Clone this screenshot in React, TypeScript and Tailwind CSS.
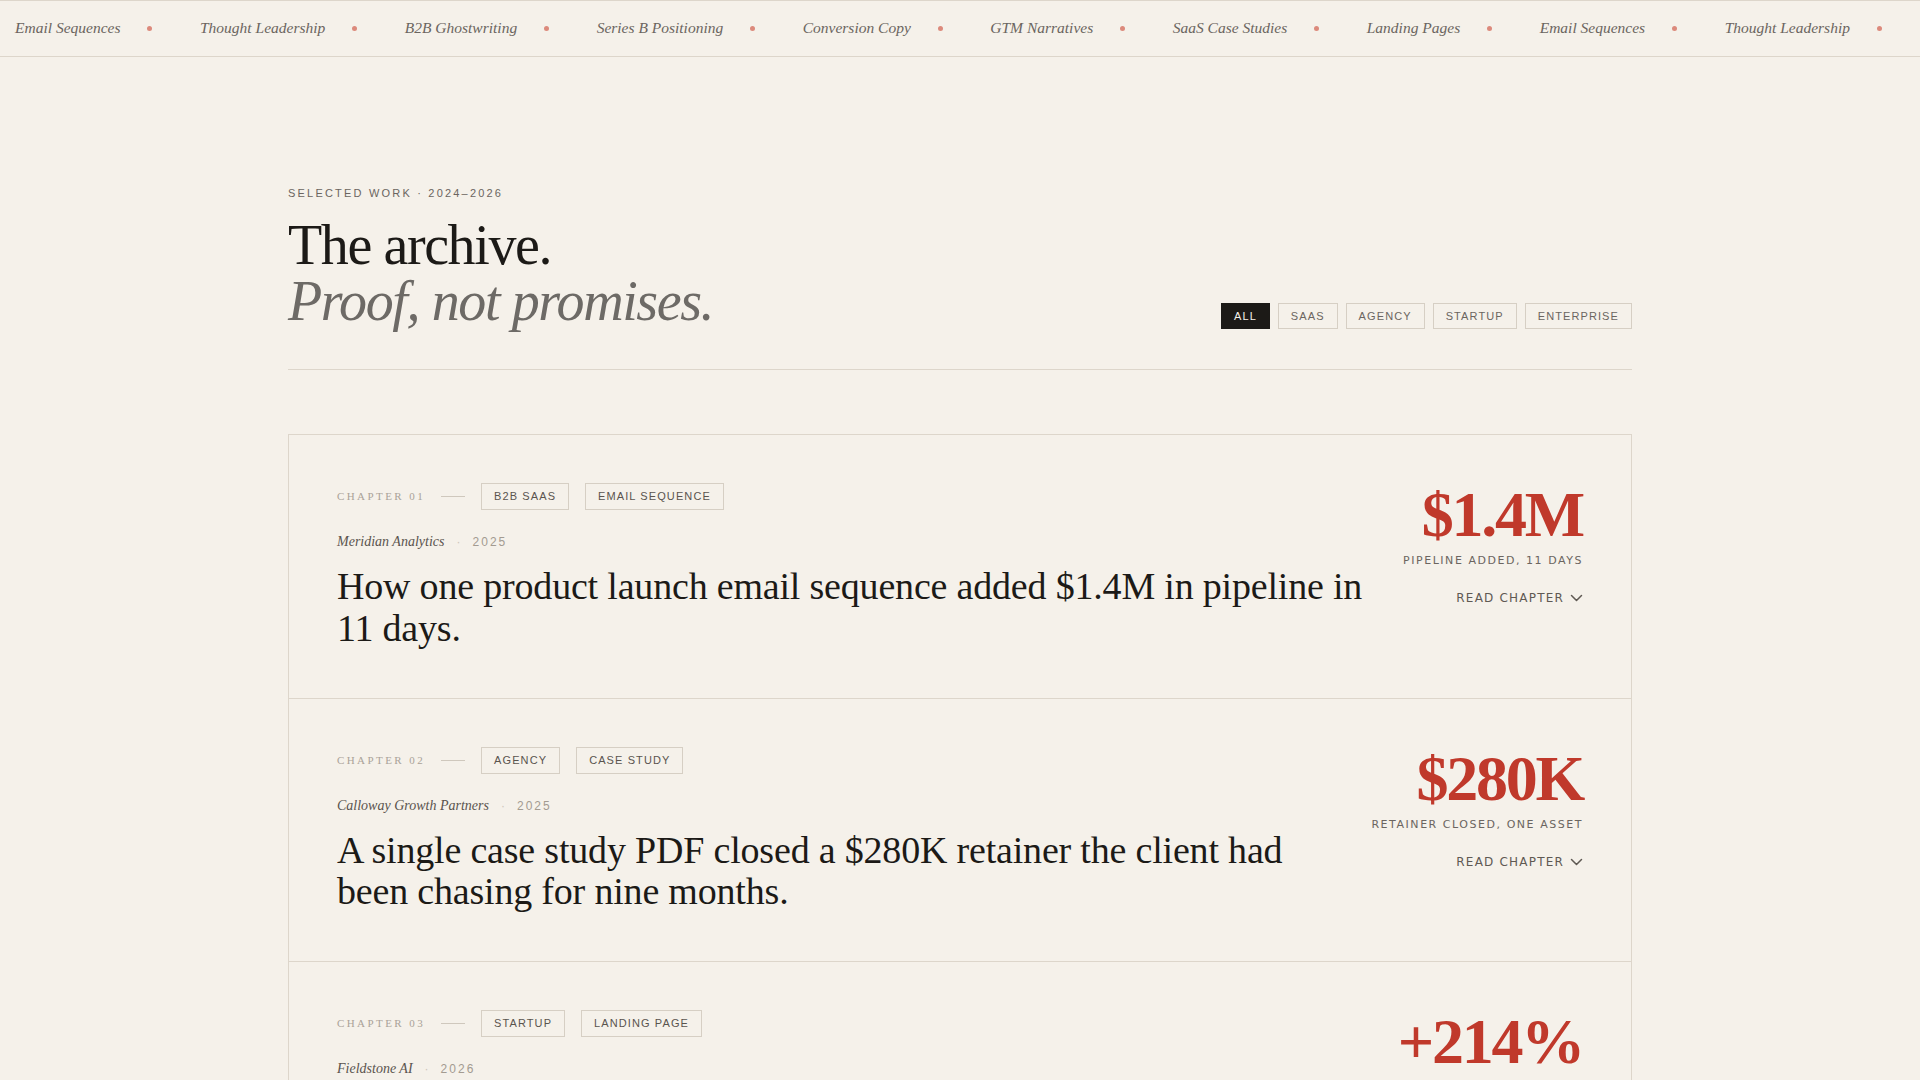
import React from 'react';

const serif = { fontFamily: '"Liberation Serif", "Times New Roman", serif' };

const tickerItems = [
  'Email Sequences',
  'Thought Leadership',
  'B2B Ghostwriting',
  'Series B Positioning',
  'Conversion Copy',
  'GTM Narratives',
  'SaaS Case Studies',
  'Landing Pages',
  'Email Sequences',
  'Thought Leadership',
  'B2B Ghostwriting',
  'Series B Positioning',
];

const filters = ['All', 'SaaS', 'Agency', 'Startup', 'Enterprise'];

const chapters = [
  {
    num: '01',
    tags: ['B2B SaaS', 'Email Sequence'],
    client: 'Meridian Analytics',
    year: '2025',
    title: 'How one product launch email sequence added $1.4M in pipeline in 11 days.',
    stat: '$1.4M',
    statLabel: 'Pipeline added, 11 days',
  },
  {
    num: '02',
    tags: ['Agency', 'Case Study'],
    client: 'Calloway Growth Partners',
    year: '2025',
    title: 'A single case study PDF closed a $280K retainer the client had been chasing for nine months.',
    stat: '$280K',
    statLabel: 'Retainer closed, one asset',
  },
  {
    num: '03',
    tags: ['Startup', 'Landing Page'],
    client: 'Fieldstone AI',
    year: '2026',
    title: 'Rewriting one landing page tripled demo requests without touching the ad budget.',
    stat: '+214%',
    statLabel: 'Demo requests, 30 days',
  },
];

const Ticker = () => (
  <div className="h-[57px] border-y border-[#ddd6cb] overflow-hidden flex items-center pl-[15px]">
    {tickerItems.map((item, i) => (
      <div key={i} className="flex items-center gap-[27px] pr-[47.5px] shrink-0 whitespace-nowrap">
        <span className="italic text-[15.5px] leading-5 -mt-px text-[#6b6560]" style={serif}>
          {item}
        </span>
        <span className="w-[5px] h-[5px] rounded-full bg-[#dc8a7c]" />
      </div>
    ))}
  </div>
);

const Chevron = () => (
  <svg width="13" height="8" viewBox="0 0 13 8" fill="none" stroke="currentColor" strokeWidth="1.5" strokeLinecap="round" strokeLinejoin="round">
    <path d="M1.5 1.5 6.5 6.5l5-5" />
  </svg>
);

const ChapterCard = ({ c }: { c: (typeof chapters)[number] }) => (
  <div className="p-12 flex items-start gap-8">
    <div className="flex-1 min-w-0">
      <div className="flex items-center gap-4">
        <span className="text-[11px] tracking-[0.22em] text-[#aaa298] uppercase" style={serif}>
          Chapter {c.num}
        </span>
        <span className="w-6 h-px bg-[#cfc8bd]" />
        {c.tags.map((t) => (
          <span
            key={t}
            className="border border-[#d6cfc4] px-3 py-[5px] leading-[15px] text-[11px] tracking-[0.1em] uppercase text-[#5a544e] font-['Liberation_Sans',Arial,sans-serif]"
          >
            {t}
          </span>
        ))}
      </div>
      <div className="mt-[22px] flex items-center gap-3 leading-5">
        <span className="italic text-[14px] text-[#5a544e]" style={serif}>
          {c.client}
        </span>
        <span className="text-[12px] text-[#cdc6bb] font-['Liberation_Sans',Arial,sans-serif]">·</span>
        <span className="text-[12px] tracking-[0.17em] text-[#a39b91] font-['Liberation_Sans',Arial,sans-serif]">
          {c.year}
        </span>
      </div>
      <h2 className="mt-[14px] text-[38px] leading-[1.1] tracking-[-0.005em] text-[#1c1a17]" style={serif}>
        {c.title}
      </h2>
    </div>
    <div className="flex flex-col items-end text-right">
      <div className="text-[64px] leading-none font-bold tracking-[-0.035em] text-[#c0392b]" style={serif}>
        {c.stat}
      </div>
      <div className="mt-[6px] text-[11px] leading-4 tracking-[0.14em] uppercase text-[#6b6560] font-['DejaVu_Sans',sans-serif]">
        {c.statLabel}
      </div>
      <button className="mt-[21px] flex items-center gap-[6px] text-[12px] leading-4 tracking-[0.1em] uppercase text-[#5f5953] font-['DejaVu_Sans',sans-serif]">
        Read chapter
        <Chevron />
      </button>
    </div>
  </div>
);

export default function App() {
  return (
    <div className="min-h-screen bg-[#f5f1ea] text-[#1c1a17]">
      <Ticker />
      <main className="max-w-[1344px] mx-auto pt-32 pb-24">
        <header className="flex items-end justify-between pb-10 border-b border-[#ddd6cb]">
          <div>
            <p className="text-[11px] leading-4 tracking-[0.2em] uppercase text-[#6b6560] font-['Liberation_Sans',Arial,sans-serif]">
              Selected Work · 2024–2026
            </p>
            <h1 className="mt-4 text-[56px] leading-none tracking-[-0.025em]" style={serif}>
              <span className="block text-[#1c1a17]">The archive.</span>
              <span className="block italic text-[#6d6a66]">Proof, not promises.</span>
            </h1>
          </div>
          <div className="flex items-center gap-2">
            {filters.map((f, i) => (
              <button
                key={f}
                className={
                  i === 0
                    ? 'h-[26px] px-3 border border-[#1c1a17] bg-[#1c1a17] text-[#f5f1ea] text-[11px] tracking-[0.1em] uppercase font-["Liberation_Sans",Arial,sans-serif]'
                    : 'h-[26px] px-3 border border-[#d6cfc4] text-[#6b6560] text-[11px] tracking-[0.1em] uppercase font-["Liberation_Sans",Arial,sans-serif]'
                }
              >
                {f}
              </button>
            ))}
          </div>
        </header>

        <section className="mt-16 border border-[#ddd6cb] divide-y divide-[#ddd6cb]">
          {chapters.map((c) => (
            <ChapterCard key={c.num} c={c} />
          ))}
        </section>
      </main>
    </div>
  );
}
